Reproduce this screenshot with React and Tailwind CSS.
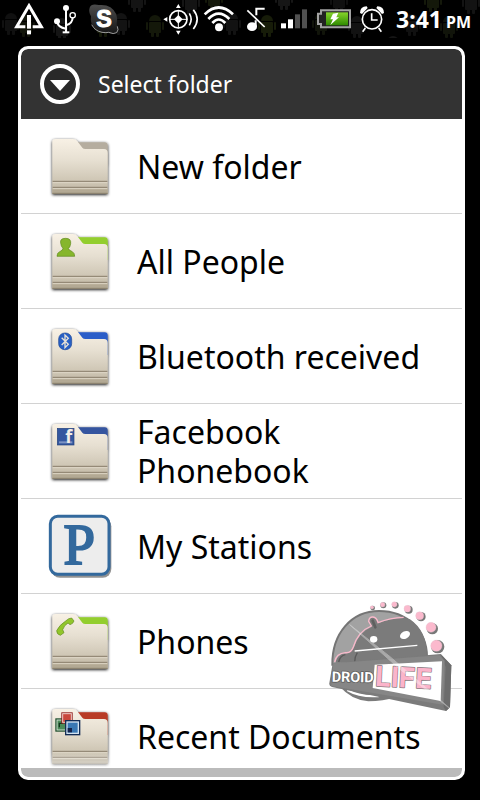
import React, { useState } from 'react';

// x, y and colour of the faint robots behind the status icons
const robots = [
  [2, 11, '#101010'],
  [17, 13, '#12150a'],
  [53, 16, '#141414'],
  [94, 13, '#141808'],
  [112, 11, '#131313'],
  [128, -12, '#141414'],
  [146, 13, '#14180a'],
  [182, -10, '#141414'],
  [205, -14, '#14180a'],
  [223, 11, '#121212'],
  [258, 13, '#171c09'],
  [275, -14, '#161616'],
  [312, 11, '#11140a'],
  [330, -12, '#101010'],
  [348, 14, '#121212'],
  [384, 34, '#151515'],
  [403, 12, '#101010'],
  [424, -12, '#14180a'],
  [440, 14, '#11140a'],
  [462, -10, '#131313'],
];

const StatusBackdrop = () => (
  <svg className="absolute inset-0 w-full h-full" aria-hidden="true">
    {robots.map(([x, y, color]) => (
      <g key={`${x}-${y}`} transform={`translate(${x} ${y})`} fill={color}>
        <path d="M3 8a6 6 0 0 1 12 0z" />
        <rect x="3" y="9" width="12" height="11" rx="1" />
        <rect x="0" y="9" width="2" height="8" rx="1" />
        <rect x="16" y="9" width="2" height="8" rx="1" />
        <rect x="5" y="19" width="3" height="5" rx="1" />
        <rect x="10" y="19" width="3" height="5" rx="1" />
      </g>
    ))}
  </svg>
);

const WarningIcon = () => (
  <svg width="32" height="32" viewBox="39 11 96 96">
    <path d="M76 82H50L87 19L124 82H98" fill="none" stroke="#fff" strokeWidth="9" />
    <rect x="81" y="47" width="12" height="41" fill="#fff" />
    <rect x="81" y="93" width="12" height="12" fill="#fff" />
  </svg>
);

const UsbIcon = () => (
  <svg width="24" height="30" viewBox="159 8 72 90">
    <g fill="none" stroke="#fff" strokeWidth="6">
      <path d="M198 22V94M172 60Q173 78 198 82M198 72Q218 67 218 48" />
      <circle cx="218" cy="42" r="8" strokeWidth="4" />
    </g>
    <circle cx="198" cy="20" r="9" fill="#fff" />
    <circle cx="171" cy="60" r="9" fill="#fff" />
    <rect x="188" y="90" width="20" height="6" fill="#fff" />
  </svg>
);

const SkypeIcon = () => (
  <svg width="32" height="32" viewBox="265 8 96 96">
    <defs>
      <linearGradient id="skype" x1="0" y1="0" x2="0" y2="1">
        <stop offset="0" stopColor="#4c4c4c" />
        <stop offset="1" stopColor="#161616" />
      </linearGradient>
    </defs>
    <path
      d="M270 22Q274 10 292 13Q298 15 305 14Q337 14 350 42Q355 58 351 72Q359 90 350 98Q339 104 326 97Q300 101 284 84Q271 69 274 48Q266 34 270 22Z"
      fill="url(#skype)"
    />
    <path d="M276 73Q286 92 307 96Q320 98 327 96Q342 103 351 97Q358 89 353 78" fill="none" stroke="#ddd" strokeWidth="2" />
    <text x="313" y="79" textAnchor="middle" fontFamily="Liberation Sans, sans-serif" fontWeight="700" fontSize="70" fill="#fff" stroke="#fff" strokeWidth="3">S</text>
  </svg>
);

const GpsIcon = () => (
  <svg width="36" height="32" viewBox="490 8 108 96">
    <circle cx="536" cy="57" r="26" fill="none" stroke="#fff" strokeWidth="5" />
    <path d="M536 30V84M509 57H563" stroke="#fff" strokeWidth="3" />
    <path d="M536 44L549 57L536 70L523 57Z" fill="#fff" />
    <path d="M536 11L543 23H529ZM536 103L543 91H529ZM491 57L503 50V64Z" fill="#fff" />
    <path d="M569 39Q580 57 569 75M581 28Q604 57 581 86" fill="none" stroke="#fff" strokeWidth="5" />
  </svg>
);

const WifiIcon = () => (
  <svg width="32" height="28" viewBox="609 14 96 84">
    <g fill="none" stroke="#fff" strokeWidth="8">
      <path d="M614 42Q656 1 699 42" />
      <path d="M625 56Q656 24 688 56" />
      <path d="M637 68Q656 47 676 68" />
    </g>
    <circle cx="657" cy="81" r="12" fill="#fff" />
  </svg>
);

const SilentIcon = () => (
  <svg width="20" height="26" viewBox="21 17 60 78">
    <path d="M52 45V25H77M50 60V80" fill="none" stroke="#fff" strokeWidth="6" />
    <ellipse cx="39" cy="79" rx="15" ry="13" fill="#fff" />
    <path d="M25 30L77 80" stroke="#fff" strokeWidth="5" />
  </svg>
);

const SignalIcon = () => (
  <svg width="28" height="22" viewBox="123 32 84 66">
    <rect x="126" y="78" width="15" height="15" fill="#fff" />
    <rect x="147" y="66" width="15" height="27" fill="#fff" />
    <rect x="168" y="51" width="15" height="42" fill="#505050" />
    <rect x="189" y="36" width="15" height="57" fill="#505050" />
  </svg>
);

const BatteryIcon = () => (
  <svg width="36" height="22" viewBox="225 26 108 66">
    <defs>
      <linearGradient id="battery" x1="0" y1="0" x2="0" y2="1">
        <stop offset="0" stopColor="#86d42c" />
        <stop offset="1" stopColor="#2f8a00" />
      </linearGradient>
    </defs>
    <path d="M240 33H327V84H240V74H231V43H240Z" fill="#222" stroke="#a2a2a2" strokeWidth="6" />
    <rect x="255" y="39" width="66" height="39" fill="url(#battery)" />
    <path d="M276 43L292 40L286 54H294L268 77L276 60H268Z" fill="#fff" />
  </svg>
);

const AlarmIcon = () => (
  <svg width="26" height="28" viewBox="355 15 78 84">
    <g fill="none" stroke="#fff" strokeWidth="5">
      <circle cx="394" cy="58" r="29" />
      <path d="M393 40V60H411M374 84L366 95M414 84L422 95" />
    </g>
    <path d="M358 39Q358 20 378 19L381 24L364 42ZM430 39Q430 20 410 19L407 24L424 42Z" fill="#fff" />
  </svg>
);

// Small pictures drawn on the front of the folders
const badges = {
  people: (
    <g fill="#86b62c" stroke="#5f8a1e" strokeWidth="2">
      <path d="M92 69Q89 55 107 55Q124 55 122 71Q120 83 115 85Q116 91 127 95Q134 99 134 109H81Q81 98 89 95Q99 91 99 85Q93 80 92 69Z" />
    </g>
  ),
  bluetooth: (
    <g>
      <rect x="86" y="54" width="39" height="50" rx="18" fill="#2860c4" stroke="#1d4795" strokeWidth="2" />
      <path d="M95 68L115 88L105 98V60L115 70L95 90" fill="none" stroke="#e8e2d6" strokeWidth="4" />
    </g>
  ),
  facebook: (
    <g>
      <rect x="82" y="55" width="50" height="50" fill="#34579f" stroke="#25427d" strokeWidth="2" />
      <rect x="87" y="94" width="40" height="6" fill="#7b93c4" />
      <text x="116" y="100" textAnchor="middle" fontFamily="Open Sans, sans-serif" fontWeight="700" fontSize="54" fill="#f2efe8">f</text>
    </g>
  ),
  phone: (
    <path
      d="M107 63Q116 54 125 54L132 63Q129 72 120 74L114 69Q103 75 98 89L102 98L91 106Q80 103 80 92Q88 75 107 63Z"
      fill="#92c62c"
      stroke="#5f8a1e"
      strokeWidth="2"
    />
  ),
  documents: (
    <g transform="translate(0 -285)">
      <rect x="76" y="355" width="38" height="40" fill="#194b28" />
      <rect x="81" y="360" width="28" height="30" fill="#4c8a58" stroke="#cfe0d0" strokeWidth="3" />
      <path d="M88 382V370H98" fill="none" stroke="#12351c" strokeWidth="4" />
      <rect x="94" y="337" width="34" height="34" fill="#8c1c1c" />
      <rect x="98" y="341" width="26" height="26" fill="#c9483d" stroke="#efcfca" strokeWidth="3" />
      <rect x="105" y="360" width="46" height="46" fill="#122c55" />
      <rect x="111" y="366" width="34" height="34" fill="#3a78b4" stroke="#d3e2f0" strokeWidth="4" />
      <rect x="113" y="384" width="13" height="13" fill="#14224a" />
    </g>
  ),
};

const FolderIcon = ({ color, badge }) => (
  <svg className="w-16 h-16 shrink-0" viewBox="54 27 192 192" aria-hidden="true">
    <defs>
      <linearGradient id="paper" x1="0" y1="0" x2="0" y2="1">
        <stop offset="0" stopColor="#f8f1e5" />
        <stop offset="0.4" stopColor="#e6dfd1" />
        <stop offset="1" stopColor="#bfb6a2" />
      </linearGradient>
      <filter id="folder-shadow" x="-20%" y="-20%" width="140%" height="140%">
        <feDropShadow dx="0" dy="3" stdDeviation="5" floodColor="#000" floodOpacity="1" />
      </filter>
    </defs>
    <g filter="url(#folder-shadow)">
      <path d="M130 52H224Q233 52 233 61V120H130Z" fill={color} />
      <path d="M67 206V51Q67 42 77 42H128Q137 42 141 47L157 68Q160 72 166 72H222Q233 72 233 84V206Z" fill="url(#paper)" />
    </g>
    <path d="M67 189H233V206H67Z" fill="#b3a994" />
    <path d="M68 169H232M68 187H232" stroke="#8a7f6b" strokeWidth="3" />
    <path d="M68 173H232M68 191H232" stroke="#ded6c6" strokeWidth="3" />
    <path d="M67 205H233" stroke="#857b68" strokeWidth="3" />
    {badges[badge]}
  </svg>
);

const StationIcon = () => (
  <svg className="w-16 h-16 shrink-0" viewBox="54 327 192 192" aria-hidden="true">
    <rect x="64" y="338" width="180" height="180" rx="26" fill="#777" opacity="0.8" />
    <rect x="61" y="334" width="176" height="174" rx="22" fill="#ededed" stroke="#33699d" strokeWidth="9" />
    <text x="148" y="478" textAnchor="middle" fontFamily="Liberation Serif, serif" fontSize="170" fill="#33699d" stroke="#33699d" strokeWidth="6">P</text>
  </svg>
);

const DroidLifeLogo = () => (
  <svg className="absolute right-0 bottom-20 pointer-events-none" width="170" height="130" viewBox="0 0 510 390" role="img" aria-label="Droid Life">
    {/* Disc and robot head */}
    <path d="M90 290Q122 328 175 334Q220 334 256 322L200 290Z" fill="#7b7b7b" />
    <path d="M112 300Q150 322 206 318" fill="none" stroke="#fff" strokeWidth="7" />
    <path d="M67 224C66 130 124 63 207 63C292 63 350 122 351 200L340 212Z" fill="#a2a2a2" stroke="#757575" strokeWidth="6" />
    <path d="M76 218Q81 194 106 190Q124 190 131 174Q146 126 186 110L177 94Q179 80 190 82Q200 83 205 100Q243 84 281 84L300 88Q352 124 350 198L340 212Z" fill="#7b7b7b" />
    <path d="M74 216Q79 190 106 188Q123 190 130 171Q144 124 184 108L176 94Q177 80 189 81Q200 82 204 98Q240 83 281 82" fill="none" stroke="#f9b9cb" strokeWidth="4" />
    <path d="M188 92L196 112" stroke="#5f5f5f" strokeWidth="8" strokeLinecap="round" />
    <path d="M86 216Q90 197 106 194M134 216Q134 200 142 188" fill="none" stroke="#5a5a5a" strokeWidth="4" />
    <path d="M134 183L322 166" fill="none" stroke="#fff" strokeWidth="4" />
    <ellipse cx="191" cy="148" rx="11" ry="10" fill="#fff" />
    <ellipse cx="285" cy="135" rx="16" ry="11" fill="#fff" transform="rotate(-28 285 135)" />

    {/* Name plate */}
    <path d="M68 220L392 192L424 226L420 352L408 363L66 291Q57 288 58 280Z" fill="#7b7b7b" />
    <path d="M392 192L424 226L420 352L408 363L401 351L407 232Z" fill="#6c6c6c" />
    <path d="M70 220L388 196L404 212L398 344L64 288Z" fill="#868686" />
    <path d="M194 224L396 214L392 333L188 294Z" fill="#fff" />
    <g paintOrder="stroke" strokeLinejoin="round">
      <text x="65" y="275" fontFamily="Roboto, sans-serif" fontWeight="700" fontSize="43" fill="#fff" stroke="#606060" strokeWidth="5" transform="rotate(1 65 275)">DROID</text>
      <text x="194" y="288" fontFamily="Inter, sans-serif" fontWeight="700" fontSize="84" fill="#fbb4ca" stroke="#85777c" strokeWidth="4" transform="rotate(3 194 288)">LIFE</text>
    </g>
    <path d="M119 104L240 200L430 364L270 238Z" fill="#fff" stroke="#fff" strokeWidth="3" opacity="0.35" />

    <g fill="#777">
      <circle cx="188" cy="54" r="7" />
      <circle cx="220" cy="46" r="9" />
      <circle cx="256" cy="46" r="10" />
      <circle cx="296" cy="59" r="12" />
      <circle cx="333" cy="80" r="14" />
      <circle cx="367" cy="116" r="17" />
      <circle cx="383" cy="170" r="20" />
    </g>
    <g fill="#fbb9cd" stroke="#e5c8d0" strokeWidth="1">
      <circle cx="186" cy="52" r="5" />
      <circle cx="218" cy="44" r="7" />
      <circle cx="253" cy="43" r="8" />
      <circle cx="292" cy="56" r="10" />
      <circle cx="329" cy="77" r="12" />
      <circle cx="363" cy="112" r="15" />
      <circle cx="379" cy="167" r="17" />
    </g>
  </svg>
);

const folders = [
  { name: 'New folder', color: '#b5ad9f' },
  { name: 'All People', color: '#93ce2d', badge: 'people' },
  { name: 'Bluetooth received', color: '#2b5dc8', badge: 'bluetooth' },
  { name: 'Facebook Phonebook', color: '#36559f', badge: 'facebook' },
  { name: 'My Stations', station: true },
  { name: 'Phones', color: '#93ce2d', badge: 'phone' },
  { name: 'Recent Documents', color: '#b83a26', badge: 'documents' },
];

const App = () => {
  const [selected, setSelected] = useState(null);

  return (
    <div className="relative h-screen bg-black flex flex-col overflow-hidden font-['Noto_Sans',sans-serif]">
      {/* Status bar */}
      <header className="relative h-[38px] shrink-0 overflow-hidden">
        <StatusBackdrop />
        <div className="relative h-full flex items-center justify-between pl-[13px] pr-[9px] text-white">
          <div className="flex items-center gap-2">
            <WarningIcon />
            <UsbIcon />
            <div className="pl-[3px]">
              <SkypeIcon />
            </div>
          </div>
          <div className="flex items-center gap-2">
            <div className="flex items-center gap-1">
              <GpsIcon />
              <WifiIcon />
            </div>
            <div className="flex items-center gap-[14px] pl-[3px]">
              <SilentIcon />
              <SignalIcon />
            </div>
            <div className="flex items-center gap-[7px]">
              <BatteryIcon />
              <AlarmIcon />
            </div>
            <div className="flex items-baseline gap-1 pl-[3px] font-bold">
              <span className="text-[23px]">3:41</span>
              <span className="text-base">PM</span>
            </div>
          </div>
        </div>
      </header>

      {/* Folder dialog */}
      <main className="flex-1 min-h-0 mt-2 mb-5 ml-[18px] mr-[15px] flex flex-col bg-white border-[3px] border-white rounded-[10px] overflow-hidden">
        <div className="h-[70px] shrink-0 flex items-center gap-[15px] px-4 bg-[#333333] rounded-t-[7px]">
          <svg width="46" height="46" viewBox="0 0 46 46" aria-hidden="true">
            <circle cx="23" cy="23" r="18" fill="#292929" stroke="#fff" strokeWidth="4" />
            <path d="M13 19H33L23 30Z" fill="#fff" />
          </svg>
          <h1 className="text-[23px] text-white">Select folder</h1>
        </div>

        <ul className="relative flex-1 min-h-0 overflow-hidden">
          {folders.map((folder) => (
            <li key={folder.name} className="border-b border-[#d2d2d2]">
              <button
                onClick={() => setSelected(folder.name)}
                aria-pressed={selected === folder.name}
                className="w-full h-[94px] flex items-center gap-[25px] pl-[27px] pr-5 text-left text-[32px] leading-[39px] text-black"
              >
                {folder.station ? <StationIcon /> : <FolderIcon color={folder.color} badge={folder.badge} />}
                <span>{folder.name}</span>
              </button>
            </li>
          ))}
          <li aria-hidden="true" className="absolute inset-x-0 bottom-0 h-4 bg-linear-to-b from-white/0 to-white/70" />
        </ul>

        <div className="h-[9px] shrink-0 bg-[#bbbbbb] rounded-b-[7px]" />
      </main>

      <DroidLifeLogo />
    </div>
  );
};

export default App;
